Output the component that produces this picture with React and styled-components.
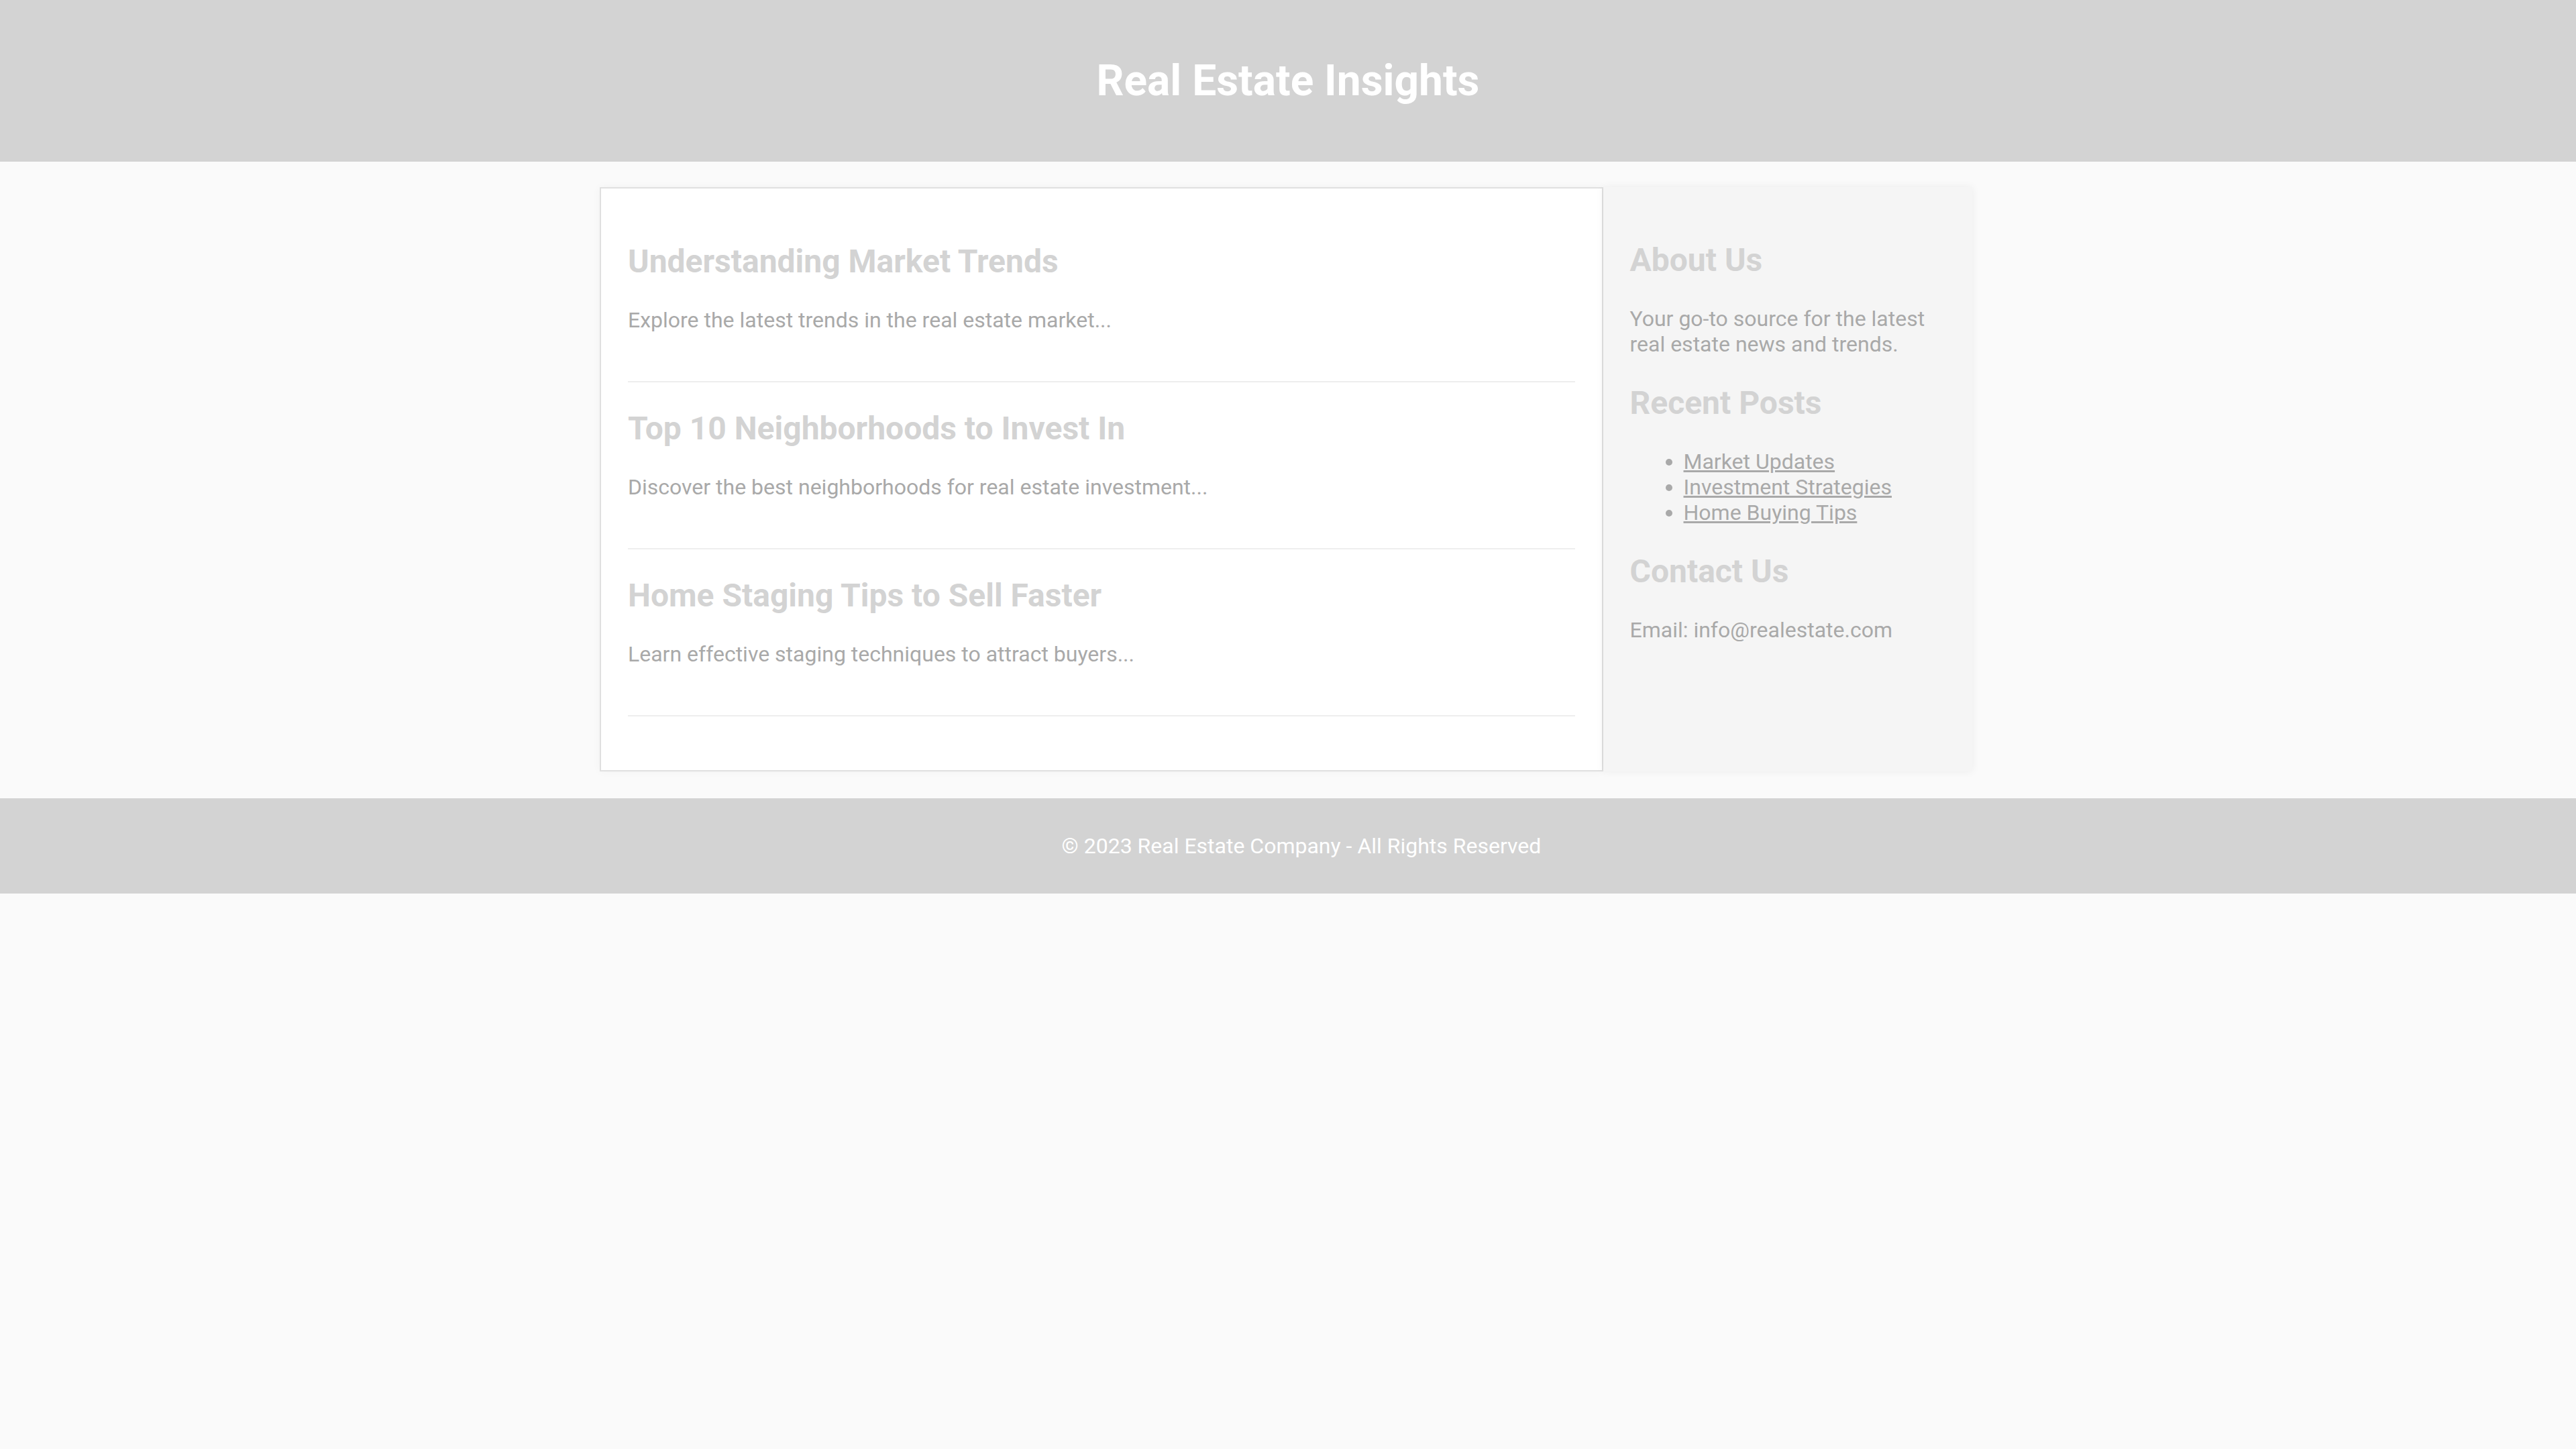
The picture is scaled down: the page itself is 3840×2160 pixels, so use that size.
import styled, { createGlobalStyle } from "styled-components";

const GlobalStyle = createGlobalStyle`
  html, body {
    margin: 0;
    padding: 0;
    background-color: #fafafa;
    font-family: Roboto, "Liberation Sans", sans-serif;
  }
`;

const Header = styled.header`
  background-color: #d3d3d3;
  padding: 40px;
  text-align: center;
`;

const SiteTitle = styled.h1`
  margin: 43px 0;
  color: #ffffff;
  font-size: 64px;
  font-weight: 700;
`;

const Container = styled.div`
  display: flex;
  width: 2046px;
  margin: 38px 0 40px calc(50% - 1026px);
`;

const Main = styled.main`
  flex: 3;
  background-color: #ffffff;
  border: 2px solid #e0e0e0;
  padding: 40px;
  box-shadow: 0 0 12px rgba(0, 0, 0, 0.04);
`;

const Article = styled.article`
  padding-bottom: 40px;
  margin-bottom: 40px;
  border-bottom: 2px solid #eeeeee;
`;

const Heading = styled.h2`
  margin: 40px 0;
  color: #d3d3d3;
  font-size: 48px;
  font-weight: 700;
`;

const Text = styled.p`
  margin: 32px 0;
  color: #a9a9a9;
  font-size: 32px;
`;

const Sidebar = styled.aside`
  flex: 1;
  background-color: #f5f5f5;
  padding: 40px;
  box-shadow: 0 0 12px rgba(0, 0, 0, 0.06);
`;

const LinkList = styled.ul`
  margin: 32px 0;
  padding-left: 80px;
  color: #a9a9a9;
  font-size: 32px;
`;

const LinkItem = styled.li``;

const PostLink = styled.a`
  color: #a9a9a9;
  text-decoration: underline;
`;

const Footer = styled.footer`
  background-color: #d3d3d3;
  padding: 20px 20px 20px 60px;
  text-align: center;
`;

const FooterText = styled.p`
  margin: 32px 0;
  color: #ffffff;
  font-size: 32px;
`;

const articles = [
  {
    id: 1,
    title: "Understanding Market Trends",
    summary: "Explore the latest trends in the real estate market...",
  },
  {
    id: 2,
    title: "Top 10 Neighborhoods to Invest In",
    summary: "Discover the best neighborhoods for real estate investment...",
  },
  {
    id: 3,
    title: "Home Staging Tips to Sell Faster",
    summary: "Learn effective staging techniques to attract buyers...",
  },
];

const recentPosts = ["Market Updates", "Investment Strategies", "Home Buying Tips"];

export default function App() {
  return (
    <>
      <GlobalStyle />
      <Header>
        <SiteTitle>Real Estate Insights</SiteTitle>
      </Header>
      <Container>
        <Main>
          {articles.map((article) => (
            <Article key={article.id}>
              <Heading>{article.title}</Heading>
              <Text>{article.summary}</Text>
            </Article>
          ))}
        </Main>
        <Sidebar>
          <Heading>About Us</Heading>
          <Text>Your go-to source for the latest real estate news and trends.</Text>
          <Heading>Recent Posts</Heading>
          <LinkList>
            {recentPosts.map((post) => (
              <LinkItem key={post}>
                <PostLink href="#">{post}</PostLink>
              </LinkItem>
            ))}
          </LinkList>
          <Heading>Contact Us</Heading>
          <Text>Email: info@realestate.com</Text>
        </Sidebar>
      </Container>
      <Footer>
        <FooterText>© 2023 Real Estate Company - All Rights Reserved</FooterText>
      </Footer>
    </>
  );
}
